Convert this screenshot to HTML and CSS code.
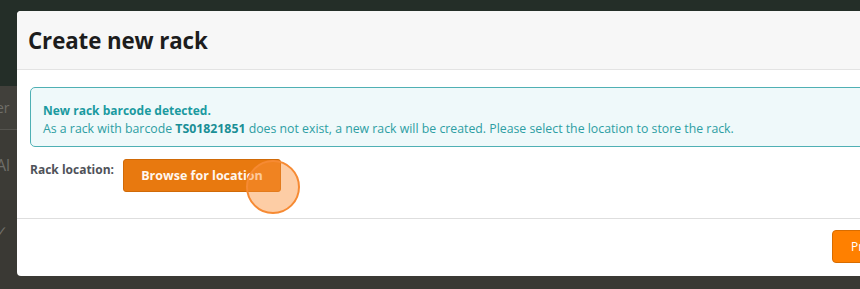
FILE: index.html
```html
<!DOCTYPE html>
<html>
<head>
<meta charset="utf-8">
<link rel="stylesheet" href="styles.css">
</head>
<body>
<div class="page">
  <div class="topbar"></div>
  <div class="row row-a"><span>er</span></div>
  <div class="row row-b"><span>Al</span></div>
  <div class="row row-c"><span>✓</span></div>
</div>
<div class="modal">
  <div class="modal-header">
    <h1 class="title">Create new rack</h1>
  </div>
  <div class="modal-body">
    <div class="alert">
      <div class="alert-title">New rack barcode detected.</div>
      <div class="alert-text">As a rack with barcode <b>TS01821851</b> does not exist, a new rack will be created. Please select the location to store the rack.</div>
    </div>
    <div class="field">
      <span class="label">Rack location:</span>
      <button class="btn-browse">Browse for location</button>
      <span class="click-dot"></span>
    </div>
  </div>
  <div class="modal-footer">
    <button class="btn-primary">Proceed</button>
  </div>
</div>
</body>
</html>
```
FILE: styles.css
```css
html, body {
  margin: 0;
  padding: 0;
  width: 860px;
  height: 289px;
  overflow: hidden;
}
body {
  background: #3a3934;
  font-family: "Open Sans", "Noto Sans", sans-serif;
  position: relative;
}
.page {
  display: flex;
  flex-direction: column;
}
.topbar {
  height: 86px;
  background: #242e28;
}
.row {
  color: #6f6e69;
  font-size: 14px;
  box-sizing: border-box;
  display: flex;
  align-items: center;
}
.row span { margin-left: -4px; }
.row-a {
  height: 44px;
  background: #41403b;
  border-bottom: 1px solid #55544f;
}
.row-b {
  height: 70px;
  background: #3c3b36;
  font-size: 16px;
}
.row-c {
  height: 60px;
  background: #3a3934;
}
.modal {
  position: absolute;
  top: 11px;
  left: 17px;
  width: 900px;
  height: 265px;
  background: #ffffff;
  border-radius: 4px;
  display: flex;
  flex-direction: column;
  overflow: hidden;
}
.modal-header {
  height: 59px;
  background: #f7f7f7;
  border-bottom: 1px solid #e3e3e3;
  display: flex;
  align-items: center;
  padding-left: 11px;
  box-sizing: border-box;
}
.title {
  margin: 0;
  font-size: 22.3px;
  font-weight: 700;
  color: #1d1d1d;
  letter-spacing: -0.1px;
}
.modal-body {
  padding: 17px 0 0 13px;
  height: 149px;
  box-sizing: border-box;
  border-bottom: 1px solid #dedede;
  position: relative;
}
.alert {
  border: 1px solid #4fb0b4;
  background: #eff9fa;
  border-radius: 5px;
  height: 60px;
  box-sizing: border-box;
  padding: 14px 0 0 12px;
  font-size: 12.3px;
  line-height: 18px;
  color: #2d9ea3;
}
.alert-title {
  font-weight: 700;
  font-size: 12px;
  color: #1a9aa0;
}
.alert-text b { font-weight: 700; color: #1a8f96; }
.field {
  display: flex;
  align-items: flex-start;
  margin-top: 12px;
  position: relative;
}
.label {
  font-size: 12px;
  font-weight: 700;
  color: #4f5259;
  margin-top: 2px;
  width: 93px;
}
.btn-browse {
  width: 158px;
  height: 33px;
  background: #e8790f;
  border: 1px solid #d06a08;
  border-radius: 3px;
  color: #fff7ef;
  font-family: inherit;
  font-size: 12.5px;
  font-weight: 700;
  padding: 0;
}
.click-dot {
  position: absolute;
  left: 216px;
  top: 1px;
  width: 50px;
  height: 50px;
  border-radius: 50%;
  border: 2px solid #f68a33;
  background: rgba(251, 145, 55, 0.45);
}
.modal-footer {
  flex: 1;
  display: flex;
  align-items: flex-start;
  padding: 11px 0 0 815px;
}
.btn-primary {
  height: 33px;
  width: 80px;
  background: #ff8000;
  border: 1px solid #d86c00;
  border-radius: 4px;
  color: #fff;
  font-family: inherit;
  font-size: 12px;
  text-align: left;
  padding-left: 18px;
}
```
